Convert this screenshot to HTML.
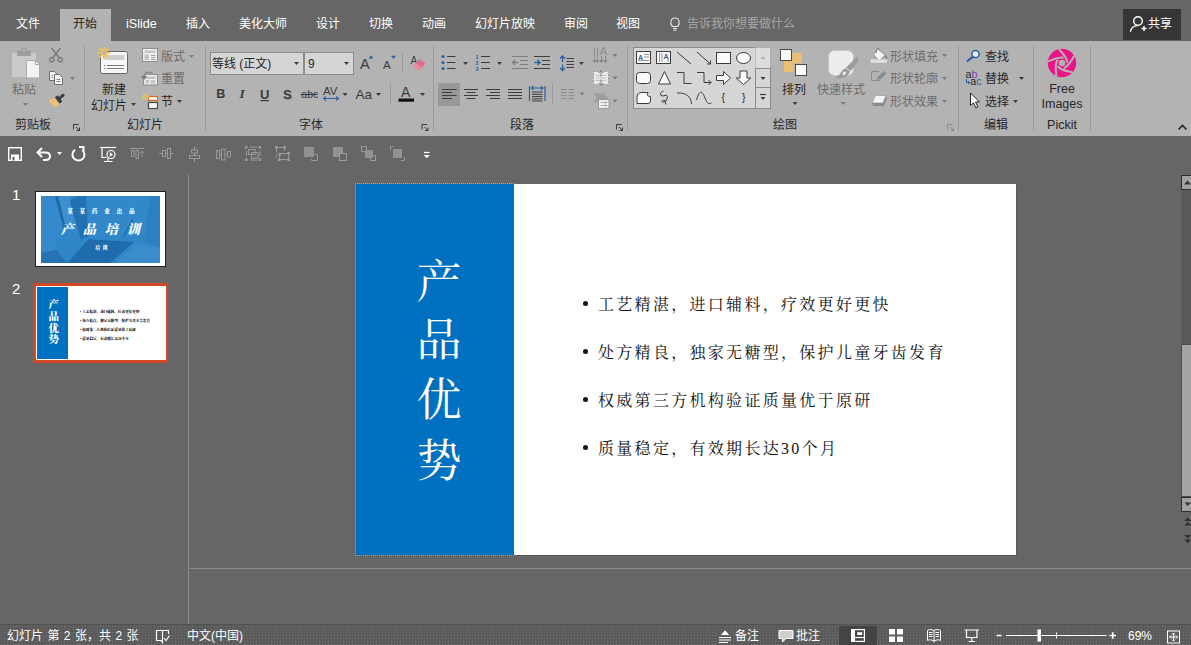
<!DOCTYPE html>
<html lang="zh-CN">
<head>
<meta charset="utf-8">
<title>PowerPoint</title>
<style>
*{box-sizing:border-box;margin:0;padding:0}
html,body{width:1191px;height:645px;overflow:hidden;background:#666666}
body{position:relative;font-family:"Liberation Sans","Noto Sans CJK SC",sans-serif;font-size:12px;color:#fff}
.abs{position:absolute}
.t{position:absolute;white-space:nowrap;line-height:16px}
svg{position:absolute;left:0;top:0;overflow:visible}
svg text{font-family:"Liberation Sans","Noto Sans CJK SC",sans-serif}
#tabs{left:0;top:0;width:1191px;height:41px;background:#666666}
#tabs .t{top:16.2px;font-size:12px;color:#fff}
#tabact{left:60px;top:9px;width:51px;height:33px;background:#b3b3b3}
#ribbon{left:0;top:41px;width:1191px;height:95px;background:#b3b3b3}
#rt .t{color:#262626;font-size:12px;margin-top:1px}
#rt .g{color:#6c6c6c}
.sep{position:absolute;top:46px;width:1px;height:85px;background:#9b9b9b}
#qat{left:0;top:136px;width:1191px;height:36px;background:#666666}
#status{left:0;top:624px;width:1191px;height:21px;background-color:#5b5b5b;background-image:radial-gradient(circle,#727272 0.55px,rgba(114,114,114,0) 0.9px);background-size:3px 3px;border-top:1px solid #525252}
#status .t{top:2.500px;color:#fff;font-size:12px}
#slide{left:356px;top:184px;width:660px;height:371px;background:#fff;box-shadow:1px 1px 0 #5a5a5a}
#blue{left:0;top:0;width:158px;height:371px;background:#0070c0}
#blueb{left:-1px;top:-1px;width:159px;height:373px;border:1px dotted #aaa49e;border-right:none}
.ttl{position:absolute;left:4px;width:158px;text-align:center;color:#fff;font-family:"Liberation Serif","Noto Serif CJK SC",serif;font-size:45px;line-height:60px;font-weight:400}
.bl{position:absolute;left:242px;color:#111;font-family:"Liberation Serif","Noto Serif CJK SC",serif;font-size:16px;letter-spacing:2.3px;line-height:24px;white-space:nowrap;font-weight:400}
.dot{position:absolute;left:226.500px;width:5px;height:5px;border-radius:2.500px;background:#111}
.kai{font-family:"Liberation Serif","Noto Serif CJK SC",serif}
</style>
</head>
<body>
<!-- tab row -->
<div id="tabs" class="abs">
  <div id="tabact" class="abs"></div>
  <div class="t" style="left:16px">文件</div>
  <div class="t" style="left:73px;color:#262626">开始</div>
  <div class="t" style="left:126px;font-size:12.600px">iSlide</div>
  <div class="t" style="left:186px">插入</div>
  <div class="t" style="left:239px">美化大师</div>
  <div class="t" style="left:316px">设计</div>
  <div class="t" style="left:369px">切换</div>
  <div class="t" style="left:422px">动画</div>
  <div class="t" style="left:475px">幻灯片放映</div>
  <div class="t" style="left:564px">审阅</div>
  <div class="t" style="left:616px">视图</div>
  <div class="t" style="left:687px;color:#a6a6a6">告诉我你想要做什么</div>
  <div class="abs" style="left:1123px;top:9px;width:58px;height:31px;background:#363636"></div>
  <div class="t" style="left:1148px">共享</div>
</div>
<div id="ribbon" class="abs"></div>
<div class="sep" style="left:84px"></div>
<div class="sep" style="left:205px"></div>
<div class="sep" style="left:433px"></div>
<div class="sep" style="left:627px"></div>
<div class="sep" style="left:958px"></div>
<div class="sep" style="left:1033px"></div>
<div class="sep" style="left:1090px"></div>
<div id="rt">
  <div class="t g" style="left:12px;top:81px">粘贴</div>
  <div class="t" style="left:15px;top:116px">剪贴板</div>
  <div class="t" style="left:102px;top:81px">新建</div>
  <div class="t" style="left:91px;top:96.500px">幻灯片</div>
  <div class="t g" style="left:161px;top:48px">版式</div>
  <div class="t g" style="left:161px;top:70px">重置</div>
  <div class="t" style="left:161px;top:93px">节</div>
  <div class="t" style="left:127px;top:116px">幻灯片</div>
  <div class="abs" style="left:210px;top:52px;width:94px;height:23px;background:#d5d5d5;border:1px solid #8c8c8c"></div>
  <div class="abs" style="left:304px;top:52px;width:50px;height:23px;background:#d5d5d5;border:1px solid #8c8c8c"></div>
  <div class="t" style="left:212px;top:55px">等线 (正文)</div>
  <div class="t" style="left:308px;top:55px">9</div>
  <div class="t" style="left:299px;top:116px">字体</div>
  <div class="t" style="left:510px;top:116px">段落</div>
  <div class="t" style="left:773px;top:116px">绘图</div>
  <div class="t" style="left:782px;top:81px">排列</div>
  <div class="t g" style="left:817px;top:81px">快速样式</div>
  <div class="t g" style="left:890px;top:48px">形状填充</div>
  <div class="t g" style="left:890px;top:70px">形状轮廓</div>
  <div class="t g" style="left:890px;top:93px">形状效果</div>
  <div class="t" style="left:985px;top:48px">查找</div>
  <div class="t" style="left:985px;top:70px">替换</div>
  <div class="t" style="left:985px;top:93px">选择</div>
  <div class="t" style="left:984px;top:116px">编辑</div>
  <div class="t" style="left:1034px;top:80px;width:56px;text-align:center;font-size:12.5px">Free</div>
  <div class="t" style="left:1034px;top:95px;width:56px;text-align:center;font-size:12.5px">Images</div>
  <div class="t" style="left:1034px;top:116px;width:56px;text-align:center;font-size:12.5px">Pickit</div>
</div>
<svg width="1191" height="172" viewBox="0 0 1191 172">
<defs>
  <polygon id="dd" points="-2.5,-1.5 2.5,-1.5 0,1.5"/>
  <g id="star" stroke="#f0c25c" stroke-width="2" stroke-linecap="round">
    <line x1="-5.4" y1="0" x2="5.4" y2="0"/><line x1="0" y1="-5.4" x2="0" y2="5.4"/>
    <line x1="-3.8" y1="-3.8" x2="3.8" y2="3.8"/><line x1="-3.8" y1="3.8" x2="3.8" y2="-3.8"/>
    <circle cx="0" cy="0" r="1.9" fill="#b3b3b3" stroke="none"/>
  </g>
  <g id="launch" fill="none" stroke-width="1">
    <path d="M0.5,5.5 V0.5 H5.5"/><path d="M3,3 L6.5,6.5 M6.5,3.5 V6.5 H3.5"/>
  </g>
</defs>
<!-- tell me bulb -->
<g fill="none" stroke="#e6e6e6" stroke-width="1.1">
  <path d="M672.5,26.5 C670,24.5 670,18 675,18 C680,18 680,24.5 677.5,26.5 Z"/>
  <line x1="673" y1="28.5" x2="677" y2="28.5"/><line x1="673.6" y1="30.3" x2="676.4" y2="30.3"/>
</g>
<!-- share person -->
<g fill="none" stroke="#fff" stroke-width="1.4">
  <circle cx="1138" cy="21" r="4.300"/>
  <path d="M1130.500,31.700 C1131,27 1134,25.800 1137.500,25.600"/>
  <path d="M1141.5,28.5 H1146.5 M1144,26 V31"/>
</g>
<!-- collapse caret -->
<path d="M1178.5,129.5 L1182.5,125.5 L1186.5,129.5" fill="none" stroke="#262626" stroke-width="1.6"/>
<!-- ===== clipboard group ===== -->
<g>
  <rect x="12" y="52.500" width="24" height="24.500" rx="1.500" fill="#cbcaca"/>
  <rect x="17" y="50.500" width="14" height="5.500" rx="1" fill="#9d9d9d"/>
  <circle cx="24" cy="50.300" r="2.600" fill="#9d9d9d"/>
  <circle cx="24" cy="50.300" r="1" fill="#c4c4c4"/>
  <path d="M26.500,60.500 H35.500 L39.500,64.500 V78 H26.500 Z" fill="#f6f2f2" stroke="#ababab" stroke-width="1"/>
  <path d="M35.500,60.500 V64.500 H39.500" fill="none" stroke="#ababab"/>
  <use href="#dd" x="25.500" y="104.500" fill="#7c7c7c"/>
</g>
<g fill="none" stroke="#7a7a7a" stroke-width="1.3">
  <path d="M51.5,48 L59.5,58 M60.5,48 L52.5,58"/>
  <circle cx="51.8" cy="59.8" r="2.1"/><circle cx="60.2" cy="59.8" r="2.1"/>
</g>
<g stroke="#6e6e6e" stroke-width="1" fill="#f2f2f2">
  <path d="M49.5,71.5 H54.5 L56.5,73.5 V80.5 H49.5 Z"/>
  <path d="M54.5,74.5 H59.5 L62.5,77.5 V84.5 H54.5 Z"/>
  <path d="M56.5,79.5 H60.5 M56.5,81.5 H60.5 M51.5,75.5 H53 M51.5,77.5 H53" fill="none" stroke-width="0.8"/>
</g>
<use href="#dd" x="72.5" y="78.5" fill="#7c7c7c"/>
<g>
  <path d="M48.400,100.600 L54.400,97.700 L59.300,103.900 L54.900,107.800 Z" fill="#eabf72"/>
  <path d="M54.800,97.300 L57.800,95.300 L62.300,101.500 L59.600,103.600 Z" fill="#3c3c3c"/>
  <path d="M60.200,97.600 L63.200,95.200" stroke="#3c3c3c" stroke-width="2.800" stroke-linecap="round"/>
</g>
<use href="#launch" x="73" y="124" stroke="#3c3c3c"/>
<!-- ===== slides group ===== -->
<rect x="100.500" y="51.500" width="27" height="22" rx="2" fill="#f7f7f7" stroke="#666"/>
<rect x="104.500" y="55" width="20" height="5" fill="#cdcdcd"/>
<path d="M107,65.500 H124 M107,68.500 H124" stroke="#7a7a7a" stroke-width="1"/>
<path d="M104,65.500 H105.500 M104,68.500 H105.500" stroke="#7a7a7a" stroke-width="1"/>
<use href="#star" x="104" y="52.800"/>
<use href="#dd" x="133.500" y="104.500" fill="#3c3c3c"/>
<!-- layout -->
<g>
  <rect x="142.500" y="48.500" width="15" height="13" fill="#f0eded" stroke="#8e8e8e"/>
  <rect x="144.500" y="50.500" width="11" height="2.500" fill="#c4c4c4"/>
  <rect x="144.500" y="54.500" width="4.500" height="5.500" fill="#c4c4c4"/>
  <path d="M151,55.500 H155.500 M151,57.500 H155.500 M151,59.500 H155.500" stroke="#9a9a9a" stroke-width="0.9"/>
  <use href="#dd" x="191.500" y="56.500" fill="#7c7c7c"/>
</g>
<!-- reset -->
<g>
  <rect x="143.500" y="74.500" width="14" height="10.500" fill="#f0eded" stroke="#8e8e8e"/>
  <rect x="145.500" y="76.500" width="10" height="2.500" fill="#c4c4c4"/>
  <rect x="145.500" y="80" width="3.500" height="3.500" fill="#c4c4c4"/>
  <path d="M150.500,81 H155.500 M150.500,83 H155.500" stroke="#9a9a9a" stroke-width="0.900"/>
  <path d="M143.800,78 C143.300,73.500 148,70.800 152.500,73.300" fill="none" stroke="#b3b3b3" stroke-width="3.400"/>
  <path d="M143.800,78 C143.300,73.500 148,70.800 152.500,73.300" fill="none" stroke="#8a8a8a" stroke-width="1.700"/>
  <path d="M140.800,76 L144,80.300 L147,76 Z" fill="#7c7c7c"/>
</g>
<!-- section -->
<g>
  <rect x="148.500" y="96.500" width="9" height="4" fill="#f8f8f8" stroke="#dd6a1f" stroke-width="1.2"/>
  <rect x="148.500" y="102.500" width="9" height="6" fill="#f8f8f8" stroke="#4a4a4a" stroke-width="1.200"/>
  <g transform="translate(145.500,96.500) scale(0.600)"><use href="#star"/></g>
  <use href="#dd" x="179.500" y="101.500" fill="#3c3c3c"/>
</g>
<!-- ===== font group ===== -->
<use href="#dd" x="296.500" y="63.500" fill="#3c3c3c"/>
<use href="#dd" x="346.500" y="63.500" fill="#3c3c3c"/>
<text x="360" y="69.200" font-size="14.500" fill="#3a3a3a">A</text>
<polygon points="368.5,58.500 373.500,58.500 371,55.300" fill="#2a5fa6"/>
<text x="383" y="69.200" font-size="11.500" fill="#3a3a3a">A</text>
<polygon points="391,55.700 396,55.700 393.500,58.900" fill="#2a5fa6"/>
<rect x="402" y="53" width="1" height="19" fill="#9b9b9b"/>
<text x="410.500" y="63.500" font-size="10" fill="#3a3a3a">A</text>
<path d="M413,66.500 L419.500,58.800 L425.500,63.500 L419,70.500 Z" fill="#e0718a"/>
<path d="M413,66.500 L415.800,63.200 L421.600,67.800 L419,70.500 Z" fill="#ea8fa3"/>
<text x="216.300" y="98.200" font-size="12.500" font-weight="bold" fill="#3a3a3a">B</text>
<text x="239.500" y="98.200" font-size="13.500" font-style="italic" font-weight="bold" fill="#3a3a3a" style="font-family:'Liberation Serif',serif">I</text>
<text x="260" y="98.500" font-size="13" font-weight="bold" fill="#3a3a3a">U</text>
<rect x="260.500" y="100" width="8.500" height="1.200" fill="#3a3a3a"/>
<text x="284.200" y="100" font-size="13" font-weight="bold" fill="#999">S</text>
<text x="283" y="98.600" font-size="13" font-weight="bold" fill="#3a3a3a">S</text>
<text x="301.300" y="97.800" font-size="10.500" fill="#3a3a3a">abc</text>
<rect x="300.500" y="94" width="17" height="1" fill="#3a3a3a"/>
<text x="323" y="95" font-size="11.500" fill="#3a3a3a">AV</text>
<path d="M323.500,98.500 H338.500 M326,96.300 L323.500,98.500 L326,100.700 M336,96.300 L338.500,98.500 L336,100.700" fill="none" stroke="#2a5fa6" stroke-width="1.100"/>
<use href="#dd" x="345" y="94.500" fill="#3c3c3c"/>
<text x="355.500" y="99" font-size="13.500" fill="#3a3a3a">Aa</text>
<use href="#dd" x="378.500" y="94.500" fill="#3c3c3c"/>
<rect x="390" y="83" width="1" height="21" fill="#9b9b9b"/>
<text x="401" y="97" font-size="14" fill="#3a3a3a">A</text>
<rect x="398.500" y="98.500" width="15.500" height="3.200" fill="#111"/>
<use href="#dd" x="422.500" y="94.500" fill="#3c3c3c"/>
<use href="#launch" x="421.500" y="124" stroke="#3c3c3c"/>
<!-- ===== paragraph group ===== -->
<g fill="#2a5fa6"><circle cx="443" cy="56.500" r="1.600"/><circle cx="443" cy="62.500" r="1.600"/><circle cx="443" cy="68.500" r="1.600"/></g>
<path d="M447,56.500 H455.500 M447,62.500 H455.500 M447,68.500 H455.500" stroke="#3c3c3c" stroke-width="1.100"/>
<use href="#dd" x="465.500" y="63.500" fill="#3c3c3c"/>
<g font-size="5.500" font-weight="bold" fill="#2a5fa6"><text x="475.500" y="58.500">1</text><text x="475.500" y="64.500">2</text><text x="475.500" y="70.500">3</text></g>
<path d="M481,56.500 H490 M481,62.500 H490 M481,68.500 H490" stroke="#3c3c3c" stroke-width="1.100"/>
<use href="#dd" x="499.500" y="63.500" fill="#3c3c3c"/>
<!-- decrease indent (disabled) -->
<g stroke="#7e7e7e" stroke-width="1.100" fill="none">
  <path d="M512,56.500 H528 M520,60.500 H528 M520,64.500 H528 M512,68.500 H528"/>
  <path d="M512.500,62.500 H518 M515,60 L512.500,62.500 L515,65" stroke-width="1.300"/>
</g>
<!-- increase indent -->
<g stroke="#3c3c3c" stroke-width="1.100" fill="none">
  <path d="M534,56.500 H550 M542,60.500 H550 M542,64.500 H550 M534,68.500 H550"/>
  <path d="M534.500,62.500 H540 M537.500,60 L540,62.500 L537.500,65" stroke="#2a5fa6" stroke-width="1.400"/>
</g>
<!-- line spacing -->
<g fill="none">
  <path d="M562.500,56 V62 M560,58.500 L562.500,56 L565,58.500 M562.500,64.500 V70.500 M560,68 L562.500,70.500 L565,68" stroke="#2a62a3" stroke-width="1.400"/>
  <path d="M566.500,58.500 H574 M566.500,61.500 H574 M566.500,64.500 H574 M566.500,67.500 H574" stroke="#3c3c3c" stroke-width="1.100"/>
</g>
<use href="#dd" x="581.500" y="63.500" fill="#3c3c3c"/>
<!-- text direction (disabled) -->
<g stroke="#7c7c7c" fill="none" stroke-width="1">
  <path d="M594.500,48 V62 M597.500,48 V62 M601.500,56 V62 M605.500,56 V62" stroke-dasharray="1.500,0.700"/>
  <path d="M593,60 L594.500,62.500 L596,60 M596,60 L597.500,62.500 L599,60 M600,60 L601.500,62.500 L603,60 M604,60 L605.500,62.500 L607,60"/>
</g>
<text x="599.800" y="55.200" font-size="11" fill="#8c8c8c">A</text>
<use href="#dd" x="615" y="55.500" fill="#7c7c7c"/>
<!-- align text (disabled) -->
<g>
  <rect x="593.500" y="71.500" width="15" height="13" fill="#e8e8e8" stroke="#9a9a9a" stroke-dasharray="2,1.500"/>
  <path d="M596,75.500 H606 M596,78 H606 M596,80.500 H606" stroke="#b5b5b5" stroke-width="0.800"/>
  <path d="M601,70.500 V76.500 M598.800,73 L601,70.500 L603.200,73 M601,85.500 V79.500 M598.800,83 L601,85.500 L603.200,83" stroke="#8c8c8c" fill="none" stroke-width="1.100"/>
  <use href="#dd" x="615" y="78" fill="#7c7c7c"/>
</g>
<!-- smartart (disabled) -->
<g>
  <path d="M593,93.500 H604 L608,98 L604,102 H593 L597,98 Z" fill="#969696"/>
  <path d="M593,95 H606 M593,97 H607 M594,99 H607 M593,101 H605" stroke="#b3b3b3" stroke-width="0.700"/>
  <rect x="598.500" y="99.500" width="10.500" height="9" fill="#ececec" stroke="#9a9a9a"/>
  <path d="M601,102.500 H602 M603.500,102.500 H607 M601,105.500 H602 M603.500,105.500 H607" stroke="#8c8c8c" stroke-width="1"/>
  <use href="#dd" x="615" y="101" fill="#7c7c7c"/>
</g>
<!-- align row -->
<rect x="438" y="83" width="22" height="23" fill="#989898"/>
<path d="M442,89.500 H456.500 M442,92.500 H452 M442,95.500 H456.500 M442,98.500 H452" stroke="#3c3c3c" stroke-width="1"/>
<path d="M464,89.500 H478 M466.500,92.500 H475.500 M464,95.500 H478 M466.500,98.500 H475.500" stroke="#3c3c3c" stroke-width="1"/>
<path d="M486,89.500 H500 M490,92.500 H500 M486,95.500 H500 M490,98.500 H500" stroke="#3c3c3c" stroke-width="1"/>
<path d="M508,89.500 H522 M508,92.500 H522 M508,95.500 H522 M508,98.500 H522" stroke="#3c3c3c" stroke-width="1"/>
<g fill="none">
  <path d="M529.500,86 V101 M545,86 V101" stroke="#2a5fa6" stroke-width="1.200"/>
  <path d="M531.500,88 H543 M533.500,86 L531.500,88 L533.500,90 M541,86 L543,88 L541,90" stroke="#2a5fa6" stroke-width="1.100"/>
  <path d="M532,92 H542.500 M532,94.300 H542.500 M532,96.600 H542.500 M532,98.900 H542.500 M532,101 H542.500" stroke="#3c3c3c" stroke-width="1"/>
</g>
<rect x="552" y="83" width="1" height="21" fill="#9b9b9b"/>
<path d="M561,89.500 H566.500 M568.500,89.500 H574 M561,92.500 H566.500 M568.500,92.500 H574 M561,95.500 H566.500 M568.500,95.500 H574 M561,98.500 H566.500 M568.500,98.500 H574" stroke="#8c8c8c" stroke-width="1"/>
<use href="#dd" x="582" y="94" fill="#7c7c7c"/>
<use href="#launch" x="616" y="124" stroke="#3c3c3c"/>
<!-- ===== drawing group: shapes gallery ===== -->
<rect x="633.500" y="47.500" width="137" height="61" fill="#d6d6d6" stroke="#8c8c8c"/>
<rect x="755.500" y="47.500" width="15" height="21" fill="#dcdcdc" stroke="#a8a8a8" stroke-dasharray="1,1"/>
<rect x="755.500" y="68.500" width="15" height="19" fill="#d6d6d6" stroke="#8c8c8c"/>
<rect x="755.500" y="87.500" width="15" height="21" fill="#d6d6d6" stroke="#8c8c8c"/>
<polygon points="760.500,59 765.500,59 763,56" fill="#b5b5b5"/>
<use href="#dd" x="763" y="78.500" fill="#3c3c3c"/>
<path d="M760,94.500 H766" stroke="#3c3c3c" stroke-width="1.200"/>
<use href="#dd" x="763" y="98.500" fill="#3c3c3c"/>
<g fill="#fafafa" stroke="#3c3c3c" stroke-width="1">
  <!-- row1 -->
  <rect x="636.500" y="51.500" width="14" height="12"/>
  <path d="M644,54.500 H649 M644,57 H649 M638.500,60.500 H649" stroke="#7a7a7a" stroke-width="0.800" fill="none"/>
  <rect x="656.500" y="51.500" width="14" height="12"/>
  <path d="M659.500,53 V62 M662,53 V62 M668,58.500 V62" stroke="#7a7a7a" stroke-width="0.800" fill="none"/>
  <path d="M677,52 L691,64" fill="none"/>
  <path d="M697,52 L710.500,64 M710.500,60.500 V64 H707" fill="none"/>
  <rect x="716.500" y="52.500" width="14" height="11"/>
  <ellipse cx="743.500" cy="58" rx="7" ry="5.500"/>
  <!-- row2 -->
  <rect x="636.500" y="72.500" width="14" height="11" rx="3"/>
  <path d="M664.500,71.500 L670.500,84 H658.500 Z"/>
  <path d="M677,72.500 H684 V83.500 H691.500" fill="none"/>
  <path d="M697,72.500 H704 V82.500 H711 M708.500,80 L711,82.500 L708.500,85" fill="none"/>
  <path d="M716.500,75.500 H723.500 V71.500 L730.500,78 L723.500,84.500 V80.500 H716.500 Z"/>
  <path d="M740,71 H747 V78 H750.800 L743.500,84.500 L736.200,78 H740 Z"/>
  <!-- row3 -->
  <path d="M637,103.500 V97 Q637,92.500 642,92.500 H648 Q646,96.500 650.500,96.500 V101 Q650.500,103.500 648,103.500 Z"/>
  <path d="M663.500,91 C657.500,94 661,97 665,95.500 C669,94 667.500,101 664,102 C661,103 661.500,99.500 665,100.500 L666,104.500" fill="none"/>
  <path d="M677,93 C687,92.500 691,97 691.500,104" fill="none"/>
  <path d="M696.500,100 C699.500,89 702.500,91 705,98 C707,104 709.500,104.500 711.500,103" fill="none"/>
</g>
<text x="721.500" y="101" font-size="10.500" fill="#262626">{</text>
<text x="742" y="101" font-size="10.500" fill="#262626">}</text>
<text x="638" y="59.500" font-size="7" font-weight="bold" fill="#2a5fa6">A</text>
<text x="663.500" y="58.500" font-size="7" font-weight="bold" fill="#2a5fa6">A</text>
<!-- arrange -->
<rect x="784" y="53" width="10" height="10" fill="#eabf72"/>
<rect x="784" y="62" width="10" height="10" fill="#eabf72"/>
<rect x="793" y="53" width="9" height="10" fill="#eabf72"/>
<rect x="780.500" y="49.500" width="11" height="11" fill="#fafafa" stroke="#4a4a4a"/>
<rect x="795.500" y="64.500" width="11" height="11" fill="#fafafa" stroke="#4a4a4a"/>
<use href="#dd" x="795" y="103.500" fill="#3c3c3c"/>
<!-- quick styles (disabled) -->
<rect x="828.500" y="50.500" width="25" height="25" rx="6" fill="#ececec" stroke="#c4c4c4"/>
<path d="M857.800,56 L857.800,62 L850.600,71 L846,67.500 Z" fill="#9c9c9c"/>
<path d="M845.600,68 L850.200,71.500 C848.500,77 841,78.700 835.500,78.500 C839.500,76.500 840.500,70.500 845.600,68 Z" fill="#9c9c9c"/>
<ellipse cx="844.200" cy="73.300" rx="2" ry="1.500" fill="#ececec" transform="rotate(-40 844.200 73.300)"/>
<use href="#dd" x="843" y="103.500" fill="#7c7c7c"/>
<!-- shape fill -->
<g>
  <path d="M877.800,49 L885.400,55.200 L879,61 L873.400,54.500 Z" fill="#f4f2f2" stroke="#8c8c8c"/>
  <path d="M876.500,53 C875.500,48 878.500,46.500 879,50" stroke="#8c8c8c" stroke-width="1.100" fill="none"/>
  <path d="M885.500,54.500 C887.300,56 887.500,58 887,59 L885,57.500 Z" fill="#7c7c7c"/>
  <rect x="870.700" y="59.400" width="16.200" height="3.400" fill="#e2dfdf"/>
  <use href="#dd" x="944.500" y="55.500" fill="#7c7c7c"/>
</g>
<!-- shape outline -->
<g fill="none" stroke="#8c8c8c">
  <path d="M879,71.500 H871.500 V80.500 H880"/>
  <path d="M877,80 L878,76.500 L884,71 L886.500,73.500 L880.500,79.300 Z" fill="#8c8c8c" stroke="none"/>
  <use href="#dd" x="944.500" y="78.500" fill="#7c7c7c" stroke="none"/>
</g>
<!-- shape effects -->
<g>
  <path d="M875.500,95.500 H886 L883,103 H872 Z" fill="#f3f3f3" stroke="#a0a0a0" stroke-width="0.800"/>
  <path d="M872,103 H883 L886,95.500 L887,98.500 L884,106 H873 Z" fill="#8c8c8c"/>
  <use href="#dd" x="944.500" y="101.500" fill="#7c7c7c"/>
</g>
<use href="#launch" x="947" y="124" stroke="#8a8a8a"/>
<!-- ===== editing ===== -->
<g fill="none" stroke="#2a5fa6">
  <circle cx="975.500" cy="54" r="3.600" stroke-width="1.500" fill="#e8eef6"/>
  <path d="M972.800,56.800 L967.500,61" stroke-width="2.200" stroke-linecap="round"/>
</g>
<text x="965.500" y="78" font-size="10.800" fill="#262626">a</text>
<text x="971.500" y="78" font-size="10.800" fill="#8a3aa8">b</text>
<text x="970.300" y="84.700" font-size="10.800" fill="#262626">a</text>
<text x="976.300" y="84.700" font-size="10.800" fill="#2a5fa6">c</text>
<path d="M966.500,79 V82.500 H969.500 M968,81 L969.500,82.500 L968,84" fill="none" stroke="#2a5fa6" stroke-width="1"/>
<use href="#dd" x="1021.500" y="78.500" fill="#3c3c3c"/>
<path d="M970.500,93 V105.500 L973.500,102.800 L975.800,107.800 L977.800,106.900 L975.600,102 L979.500,101.800 Z" fill="#fafafa" stroke="#262626" stroke-width="1"/>
<use href="#dd" x="1015.500" y="101.500" fill="#3c3c3c"/>
<!-- ===== pickit ===== -->
<g transform="translate(1062,63)">
  <circle r="14.200" fill="#ee1289"/>
  <g fill="none" stroke="#b3b3b3" stroke-width="2">
    <path d="M-3,-13.800 C1,-9 5,-6 5.500,0" />
    <path d="M-3,-13.800 C1,-9 5,-6 5.500,0" transform="rotate(72)"/>
    <path d="M-3,-13.800 C1,-9 5,-6 5.500,0" transform="rotate(144)"/>
    <path d="M-3,-13.800 C1,-9 5,-6 5.500,0" transform="rotate(216)"/>
    <path d="M-3,-13.800 C1,-9 5,-6 5.500,0" transform="rotate(288)"/>
  </g>
  <circle r="3.300" fill="#b3b3b3"/>
</g>
<!-- ===== QAT ===== -->
<g fill="none" stroke="#fff" stroke-width="1.400">
  <rect x="8.700" y="147.700" width="12.600" height="12.600"/>
  <rect x="11" y="154.500" width="8" height="6" fill="#fff" stroke="none"/>
  <rect x="12.500" y="157" width="2" height="3.500" fill="#666" stroke="none"/>
  <!-- undo -->
  <path d="M38,152.500 H45.500 C51.500,152.500 51.500,160 45.500,160 H43" stroke-width="2"/>
  <path d="M42,148 L37.500,152.500 L42,157" stroke-width="2"/>
  <!-- redo (repeat) -->
  <path d="M82.300,150 A6,6 0 1 1 75,149.700" stroke-width="2"/>
  <path d="M79,147 H83.500 V151.500" stroke-width="2"/>
</g>
<use href="#dd" x="59.500" y="153.500" fill="#fff"/>
<!-- present from beginning -->
<g fill="none" stroke="#fff" stroke-width="1.200">
  <path d="M100,147.500 H116"/>
  <path d="M102,148 V157.500 H106.500 M108,158 V161 M104,161.500 H112.500"/>
  <circle cx="111" cy="154.500" r="4"/>
  <path d="M109.800,152.300 L113,154.500 L109.800,156.700 Z" fill="#fff" stroke="none"/>
</g>
<!-- disabled alignment icons -->
<g fill="none" stroke="#9a9a9a" stroke-width="1">
  <path d="M130,148.500 H144"/><rect x="131.500" y="150.500" width="2.500" height="6"/><rect x="136" y="150.500" width="2.500" height="8"/><path d="M142,157 V151 M140.300,152.800 L142,151 L143.700,152.800"/>
  <path d="M159,153.500 H173.500"/><rect x="162.500" y="150.500" width="3" height="6" fill="#666"/><rect x="167.500" y="148.500" width="3" height="10" fill="#666"/>
  <path d="M194.500,147 V162"/><rect x="191.500" y="150" width="6" height="3" fill="#666"/><rect x="189.500" y="155.500" width="10" height="3" fill="#666"/>
  <rect x="216.500" y="150.500" width="3" height="8"/><rect x="221.500" y="149" width="3.500" height="11"/><rect x="227.500" y="151.500" width="3" height="5.500"/><path d="M219.500,154.500 H221.500 M225,154.500 H227.500"/>
  <!-- group -->
  <rect x="248.500" y="149.500" width="6.500" height="5"/><rect x="251.500" y="152.500" width="6.500" height="5.500"/>
  <path d="M246.500,151 V156 M260,151 V156 M250,147 H257 M250,160 H257" />
  <!-- ungroup/regroup -->
  <rect x="279.500" y="153.500" width="9" height="6"/>
  <path d="M276.500,147.500 H284.500 V151 M276.500,147.500 V152"/>
  <path d="M276,158 C276,154.500 278,154 280.500,154.500 M279,152.800 L281,154.700 L279,156.500"/>
  <!-- bring front etc -->
  <path d="M312.500,154.500 H317.500 V160.500 H311.500 V158.500"/>
  <rect x="339.500" y="153.500" width="7" height="7"/>
  <rect x="361.500" y="146.500" width="5" height="5"/><rect x="370.500" y="155.500" width="5" height="5"/>
  <path d="M390.500,150 V146.500 H394 M401,160.500 H404.500 V157"/>
</g>
<g fill="#9a9a9a">
  <rect x="245" y="146" width="2.500" height="2.500"/><rect x="258.500" y="146" width="2.500" height="2.500"/><rect x="245" y="158.500" width="2.500" height="2.500"/><rect x="258.500" y="158.500" width="2.500" height="2.500"/>
  <rect x="275" y="146" width="2.500" height="2.500"/><rect x="283.500" y="146" width="2.500" height="2.500"/><rect x="278" y="158.500" width="2.500" height="2.500"/><rect x="287.500" y="158.500" width="2.500" height="2.500"/><rect x="287.500" y="152" width="2.500" height="2.500"/>
  <rect x="304" y="147" width="10" height="10" fill="#929292"/>
  <rect x="333" y="147" width="10" height="10" fill="#929292"/>
  <rect x="365" y="150" width="8" height="8" fill="#929292"/>
  <rect x="393" y="149" width="9" height="9" fill="#929292"/>
</g>
<rect x="339.500" y="153.500" width="7" height="7" fill="#666" stroke="#9a9a9a"/>
<path d="M424,152.500 H429.500" stroke="#fff" stroke-width="1.300"/>
<polygon points="423.800,155 429.700,155 426.750,158.200" fill="#fff"/>
</svg>
<div id="qat" class="abs" style="z-index:-1"></div>
<!-- left panel -->
<div class="abs" style="left:188px;top:175px;width:1px;height:449px;background:#8e8e8e"></div>
<div class="abs" style="left:190px;top:568px;width:1001px;height:1px;background:#8e8e8e"></div>
<div class="t" style="left:12px;top:187px;font-size:15px;color:#fff">1</div>
<div class="t" style="left:12px;top:281px;font-size:15px;color:#fff">2</div>
<div id="th1" class="abs" style="left:35px;top:191px;width:131px;height:76px;background:#fff;border:1px solid #1e1e1e;overflow:hidden">
  <svg width="119" height="67" viewBox="0 0 119 67" style="left:5px;top:4px">
    <rect width="119" height="67" fill="#2f86c8"/>
    <polygon points="0,0 14,0 22,34 10,60 0,56" fill="#3389cb"/>
    <polygon points="17,0 30,0 29,5 35,34 25,34" fill="#3c90d0"/>
    <polygon points="14,0 17,0 25.500,34 23,34" fill="#1f69a6"/>
    <polygon points="29,4.700 37,0 45,0 47.700,40.700 39.700,43.300" fill="#2272b3"/>
    <polygon points="45,0 109,0 104,40 47.700,40.700" fill="#3188ca"/>
    <polygon points="26.300,67 47.700,43.300 93,46 69,67" fill="#1e6cab"/>
    <polygon points="0,56.700 15.700,54 26.300,67 0,67" fill="#2873b3"/>
    <polygon points="74,67 95.700,47.300 119,51 119,67" fill="#3a8ccb"/>
    <polygon points="109,0 119,0 119,51 104,46" fill="#2b80c2"/>
    <path d="M82.300,40.700 L91.700,23.300" stroke="#1f69a6" stroke-width="1.200"/>
    <text x="63.200" y="17.300" text-anchor="middle" font-size="5.600" font-weight="900" fill="#fff" letter-spacing="6.750" style="font-family:'Liberation Serif','Noto Serif CJK SC',serif">某某药业出品</text>
    <text x="63.800" y="37.800" text-anchor="middle" font-size="13.200" font-weight="900" font-style="italic" fill="#fff" letter-spacing="8.800" style="font-family:'Liberation Serif','Noto Serif CJK SC',serif">产品培训</text>
    <text x="61.500" y="53.300" text-anchor="middle" font-size="4.800" font-weight="900" fill="#fff" letter-spacing="2.500" style="font-family:'Liberation Serif','Noto Serif CJK SC',serif">培训</text>
  </svg>
</div>
<div id="th2" class="abs" style="left:33px;top:283px;width:135px;height:80px;background:#d24726;overflow:hidden">
  <div class="abs" style="left:3px;top:3px;width:129.500px;height:74px;background:#fff"></div>
  <div class="abs" style="left:4px;top:4px;width:31px;height:72px;background:#0070c0"></div>
  <div class="abs kai" style="left:5.200px;top:16.300px;width:31px;text-align:center;color:#fff;font-size:10.500px;line-height:11.700px;font-weight:900">产<br>品<br>优<br>势</div>
  <div class="abs kai" style="left:47px;top:23.600px;color:#000;font-size:14px;line-height:35.900px;font-weight:900;white-space:nowrap;transform:scale(.25);transform-origin:0 0;letter-spacing:0.300px">• 工艺精湛，进口辅料，疗效更好更快<br>• 处方精良，独家无糖型，保护儿童牙齿发育<br>• 权威第三方机构验证质量优于原研<br>• 质量稳定，有效期长达30个月</div>
</div>
<!-- slide -->
<div id="slide" class="abs">
  <div id="blueb" class="abs"></div><div id="blue" class="abs"></div>
  <div class="ttl" style="top:69px">产</div>
  <div class="ttl" style="top:127px">品</div>
  <div class="ttl" style="top:187px">优</div>
  <div class="ttl" style="top:248px">势</div>
  <div class="dot" style="top:117.200px"></div><div class="bl" style="top:109.200px">工艺精湛，进口辅料，疗效更好更快</div>
  <div class="dot" style="top:165.200px"></div><div class="bl" style="top:157.200px">处方精良，独家无糖型，保护儿童牙齿发育</div>
  <div class="dot" style="top:213.200px"></div><div class="bl" style="top:205.200px">权威第三方机构验证质量优于原研</div>
  <div class="dot" style="top:261.200px"></div><div class="bl" style="top:253.200px">质量稳定，有效期长达30个月</div>
</div>
<!-- scrollbar -->
<div class="abs" style="left:1181px;top:175px;width:10px;height:337px;background:#5a5a5a"></div>
<div class="abs" style="left:1181px;top:175px;width:10px;height:15px;background:#a2a2a2;border:1px solid #2e2e2e;border-right:none"></div>
<div class="abs" style="left:1181px;top:344px;width:10px;height:153px;background:#a4a4a4;border:1px solid #4e4e4e;border-right:none"></div>
<div class="abs" style="left:1181px;top:497px;width:10px;height:15px;background:#a2a2a2;border:1px solid #2e2e2e;border-right:none"></div>
<svg width="1191" height="645" viewBox="0 0 1191 645" style="pointer-events:none">
  <polygon points="1184,184.500 1191,184.500 1187.500,180.500" fill="#333"/>
  <polygon points="1184.500,502.500 1191,502.500 1187.750,506" fill="#333"/>
  <g fill="#2e2e2e">
    <polygon points="1184.500,521 1191,521 1187.750,517.500"/><polygon points="1184.500,525.500 1191,525.500 1187.750,522"/>
    <polygon points="1184.500,535 1191,535 1187.750,538.500"/><polygon points="1184.500,539.500 1191,539.500 1187.750,543"/>
  </g>
</svg>
<!-- status bar -->
<div id="status" class="abs">
  <div class="t" style="left:7px;word-spacing:1.100px">幻灯片 第 2 张，共 2 张</div>
  <div class="t" style="left:187px">中文(中国)</div>
  <div class="t" style="left:735px">备注</div>
  <div class="t" style="left:796px">批注</div>
  <div class="t" style="left:1128px">69%</div>
  <div class="abs" style="left:839px;top:1px;width:38px;height:20px;background:#444"></div>
</div>
<svg width="1191" height="645" viewBox="0 0 1191 645">
  <!-- spell -->
  <g fill="none" stroke="#fff" stroke-width="1.100">
    <path d="M162,630.500 H156.500 V640.500 H161 L162.500,642.500 V630.500 M162.500,630.500 H168.500 V634"/>
    <path d="M164,638 L166,640.500 L169.500,635.500"/>
  </g>
  <!-- notes -->
  <g fill="none" stroke="#fff" stroke-width="1.100">
    <path d="M719,637.500 H731 M719,640 H731 M719,642.500 H728"/>
    <path d="M722,634.500 L725,631 L728,634.500 Z" fill="#fff"/>
  </g>
  <!-- comments -->
  <path d="M779,630.500 H793 V638.500 H786 L782.500,642 V638.500 H779 Z" fill="#d0d0d0" stroke="#fff" stroke-width="1"/>
  <!-- normal view -->
  <g fill="none" stroke="#fff" stroke-width="1.200">
    <rect x="851.600" y="629.600" width="12.800" height="11.800"/>
    <rect x="851" y="629" width="4" height="13" fill="#fff" stroke="none"/>
    <rect x="857.200" y="632.200" width="5" height="2.800" fill="#fff" stroke="none"/>
    <path d="M855,637.500 H864.500"/>
  </g>
  <!-- sorter -->
  <g fill="#fff"><rect x="889" y="629" width="6" height="5.500"/><rect x="897" y="629" width="6" height="5.500"/><rect x="889" y="636.500" width="6" height="5.500"/><rect x="897" y="636.500" width="6" height="5.500"/></g>
  <!-- reading -->
  <g fill="none" stroke="#fff" stroke-width="1">
    <path d="M934,630.500 C931,629 929,629.500 927.500,630.500 V640.500 C929,639.500 931,639.500 934,641 C937,639.500 939,639.500 940.500,640.500 V630.500 C939,629.500 937,629 934,630.500 Z M934,630.500 V642.500"/>
    <path d="M929,632.500 H932.500 M929,634.500 H932.500 M929,636.500 H932.500 M935.500,632.500 H939 M935.500,634.500 H939 M935.500,636.500 H939"/>
  </g>
  <!-- slideshow -->
  <g fill="none" stroke="#fff" stroke-width="1.200">
    <path d="M964.500,630 H979 M966.500,630.500 V637.500 H977 V630.500 M971.750,638 V641 M968.500,641.500 H975"/>
  </g>
  <!-- zoom -->
  <g stroke="#fff" fill="none">
    <path d="M996.500,635.500 H1001.500" stroke-width="1.600"/>
    <path d="M1006,635.500 H1106.500" stroke-width="1"/>
    <path d="M1056.500,632.500 V638.500" stroke-width="1"/>
    <path d="M1109.500,635.500 H1116 M1112.750,632.300 V638.700" stroke-width="1.600"/>
    <rect x="1037.500" y="629.500" width="3.500" height="12" fill="#fff" stroke="none"/>
  </g>
  <g fill="none" stroke="#fff" stroke-width="1">
    <g transform="translate(0,1.5)"><rect x="1167.500" y="629.500" width="12" height="12"/>
    <path d="M1173.500,631.500 V639.500 M1169.500,635.500 H1177.500 M1172,633 L1173.500,631.500 L1175,633 M1172,638 L1173.500,639.500 L1175,638 M1171,634 L1169.500,635.500 L1171,637 M1176,634 L1177.500,635.500 L1176,637"/></g>
  </g>
</svg>
</body>
</html>
